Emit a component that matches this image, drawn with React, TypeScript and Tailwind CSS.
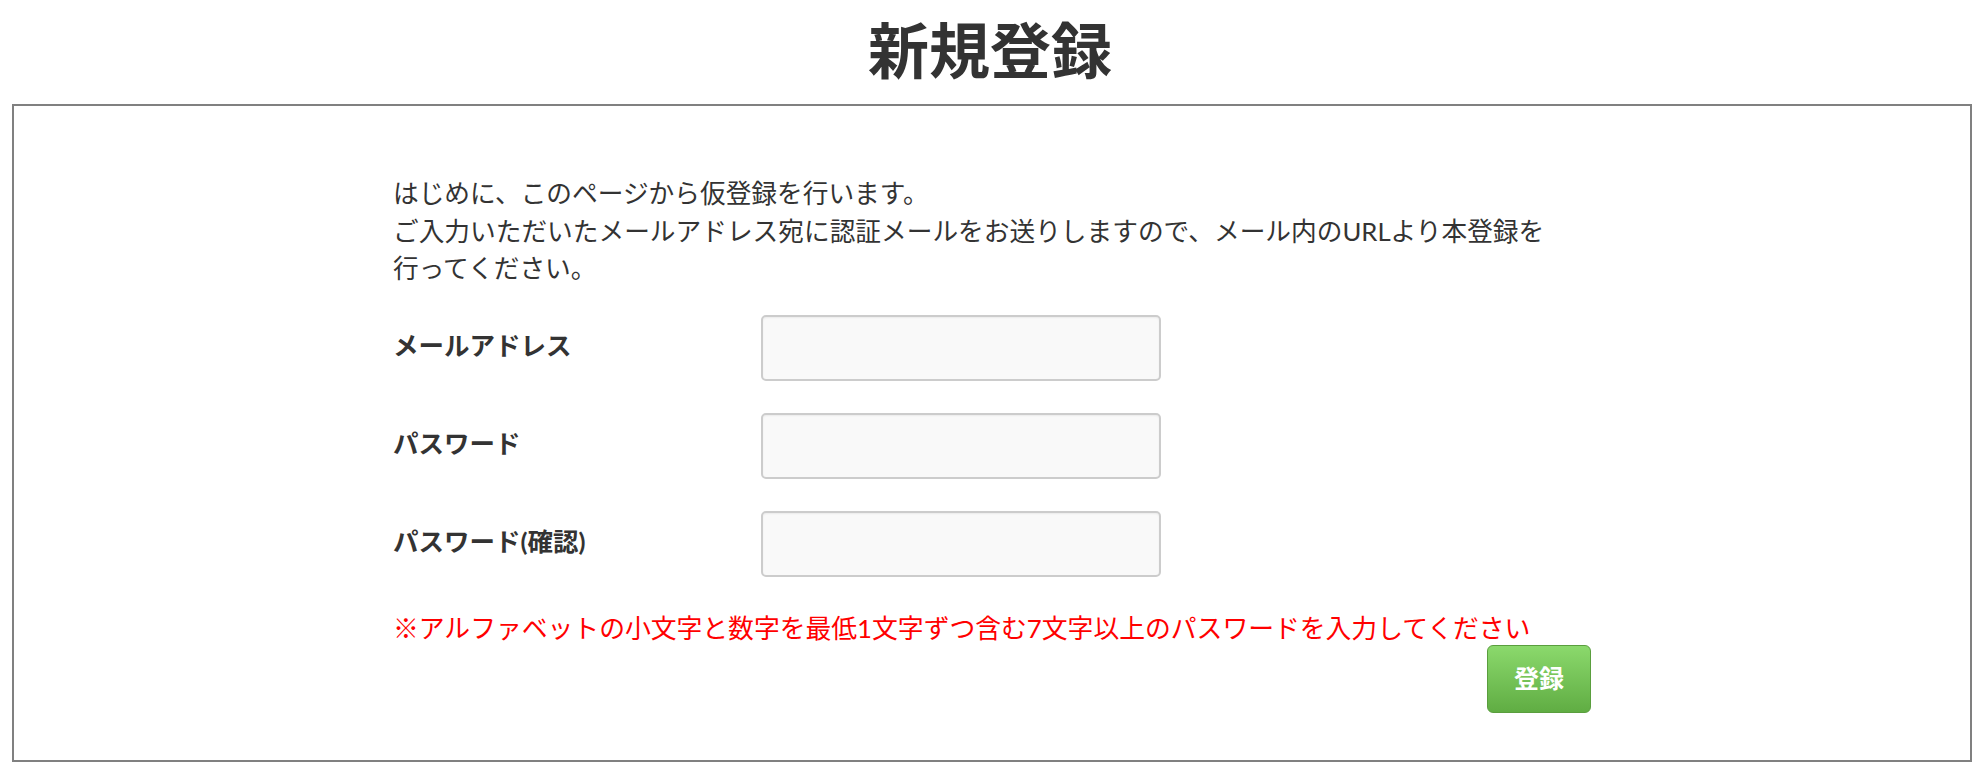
import React from "react";

const FONT = { fontFamily: '"Lato", "Noto Sans CJK JP", sans-serif' };

function Row({ label, type }: { label: string; type: string }) {
  return (
    <div className="flex items-center h-[66px]">
      <label className="w-[368px] text-[25.5px] font-bold text-[#333] leading-none -mt-[4px]">{label}</label>
      <input
        type={type}
        className="w-[400px] h-[66px] rounded-[5px] border-2 border-[#cccccc] bg-[#f9f9f9] shadow-[inset_0_1px_2px_rgba(0,0,0,0.06)] outline-none"
      />
    </div>
  );
}

export default function App() {
  return (
    <div className="w-[1980px] h-[770px] bg-white text-[#333]" style={FONT}>
      <div className="h-[104px] flex items-center justify-center pb-[4px]">
        <h1 className="text-[61px] font-bold leading-none text-[#333]">新規登録</h1>
      </div>
      <div className="ml-[12px] mr-[8px] h-[658px] border-2 border-[#808080]">
        <div className="w-[1198px] mx-auto pt-[69px]">
          <p className="text-[25.7px] leading-[37.5px] text-[#333]">
            はじめに、このページから仮登録を行います。
            <br />
            ご入力いただいたメールアドレス宛に認証メールをお送りしますので、メール内のURLより本登録を
            <br />
            行ってください。
          </p>
          <div className="mt-[27px] flex flex-col gap-[32px]">
            <Row label="メールアドレス" type="email" />
            <Row label="パスワード" type="password" />
            <Row label="パスワード(確認)" type="password" />
          </div>
          <p className="mt-[38px] mb-[4px] text-[25.8px] leading-[26px] text-[#ff0000]">
            <span className="font-bold">※</span>アルファベットの小文字と数字を最低1文字ずつ含む7文字以上のパスワードを入力してください
          </p>
          <div className="flex justify-end">
            <button className="w-[104px] h-[68px] rounded-[6px] border border-[#5a9e3e] bg-gradient-to-b from-[#8bd96c] to-[#60ad43] text-white text-[25px] font-bold leading-none">
              登録
            </button>
          </div>
        </div>
      </div>
    </div>
  );
}
